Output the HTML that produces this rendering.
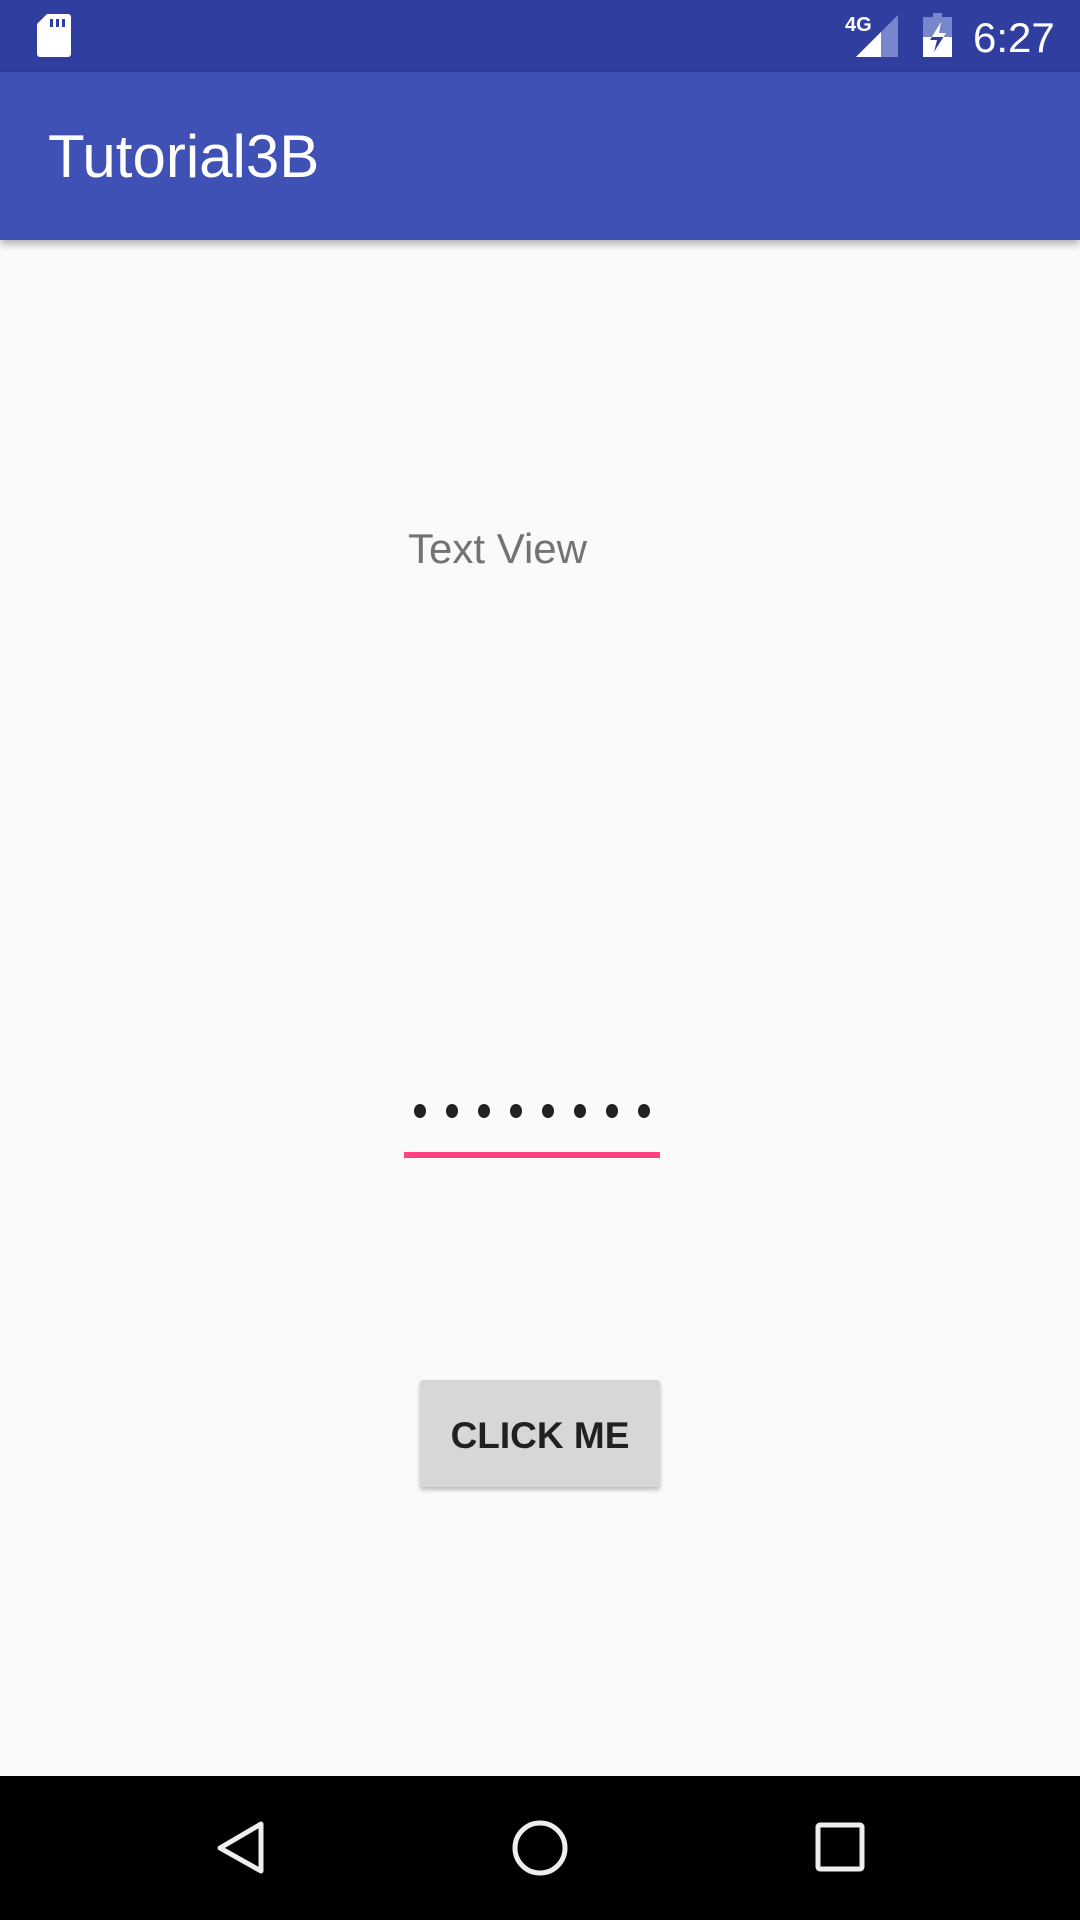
<!DOCTYPE html>
<html><head><meta charset="utf-8"><style>
html,body{margin:0;padding:0;}
body{width:1080px;height:1920px;position:relative;background:#fafafa;overflow:hidden;font-family:"Liberation Sans",sans-serif;}
.abs{position:absolute;}
</style></head><body>
<div class="abs" style="left:0;top:0;width:1080px;height:72px;background:#303f9f;"></div>
<svg class="abs" style="left:0;top:0" width="1080" height="72">
  <defs><clipPath id="lo"><rect x="920" y="37" width="40" height="25"/></clipPath></defs>
  <path d="M47 14 H68 a3 3 0 0 1 3 3 V54 a3 3 0 0 1 -3 3 H40 a3 3 0 0 1 -3 -3 V24 Z" fill="#fff"/>
  <rect x="50" y="19" width="3" height="8" fill="#303f9f"/><rect x="56" y="19" width="3" height="8" fill="#303f9f"/><rect x="62" y="19" width="3" height="8" fill="#303f9f"/>
  <path d="M898 15 V57 H856 Z" fill="#7986cb"/>
  <path d="M881 32 V57 H856 Z" fill="#fff"/>
  <text x="845" y="31" fill="#fff" font-size="20" font-weight="bold" font-family="Liberation Sans">4G</text>
  <path d="M933 13 h9 v4 h10 v40 h-29 v-40 h10z" fill="#7986cb"/>
  <rect x="923" y="37" width="29" height="20" fill="#fff"/>
  <path d="M941 22 L930 40 H937 L934 52 L946 33 H939 Z" fill="#fff"/>
  <path d="M941 22 L930 40 H937 L934 52 L946 33 H939 Z" fill="#303f9f" clip-path="url(#lo)"/>
  <text x="973" y="52" fill="#fff" font-size="42" font-family="Liberation Sans">6:27</text>
</svg>
<div class="abs" style="left:0;top:72px;width:1080px;height:168px;background:#3f51b5;box-shadow:0 4px 8px rgba(0,0,0,0.3);"></div>
<div class="abs" style="left:48px;top:122px;font-size:60px;line-height:70px;color:#fff;">Tutorial3B</div>
<div class="abs" style="left:408px;top:524px;font-size:42px;line-height:50px;color:#737373;">Text View</div>
<svg class="abs" style="left:0;top:1090px" width="1080" height="80">
  <g fill="#212121">
    <ellipse cx="420" cy="21" rx="6" ry="7"/><ellipse cx="452" cy="21" rx="6" ry="7"/><ellipse cx="484" cy="21" rx="6" ry="7"/><ellipse cx="516" cy="21" rx="6" ry="7"/>
    <ellipse cx="548" cy="21" rx="6" ry="7"/><ellipse cx="580" cy="21" rx="6" ry="7"/><ellipse cx="612" cy="21" rx="6" ry="7"/><ellipse cx="644" cy="21" rx="6" ry="7"/>
  </g>
  <rect x="404" y="62" width="256" height="6" fill="#ff4081"/>
</svg>
<div class="abs" style="left:420px;top:1380px;width:240px;height:107px;background:#d6d7d7;border-radius:3px;box-shadow:0 3px 5px rgba(0,0,0,0.25);"></div>
<div class="abs" style="left:420px;top:1382px;width:240px;height:107px;line-height:107px;text-align:center;font-size:37px;font-weight:bold;color:#212121;">CLICK ME</div>
<div class="abs" style="left:0;top:1776px;width:1080px;height:144px;background:#000;"></div>
<svg class="abs" style="left:0;top:1776px" width="1080" height="144">
  <path d="M261 48 V95 L220 72 Z" fill="none" stroke="#eee" stroke-width="5" stroke-linejoin="round"/>
  <circle cx="540" cy="72" r="25" fill="none" stroke="#eee" stroke-width="5"/>
  <rect x="818" y="49" width="44" height="44" rx="2" fill="none" stroke="#eee" stroke-width="5"/>
</svg>
</body></html>
